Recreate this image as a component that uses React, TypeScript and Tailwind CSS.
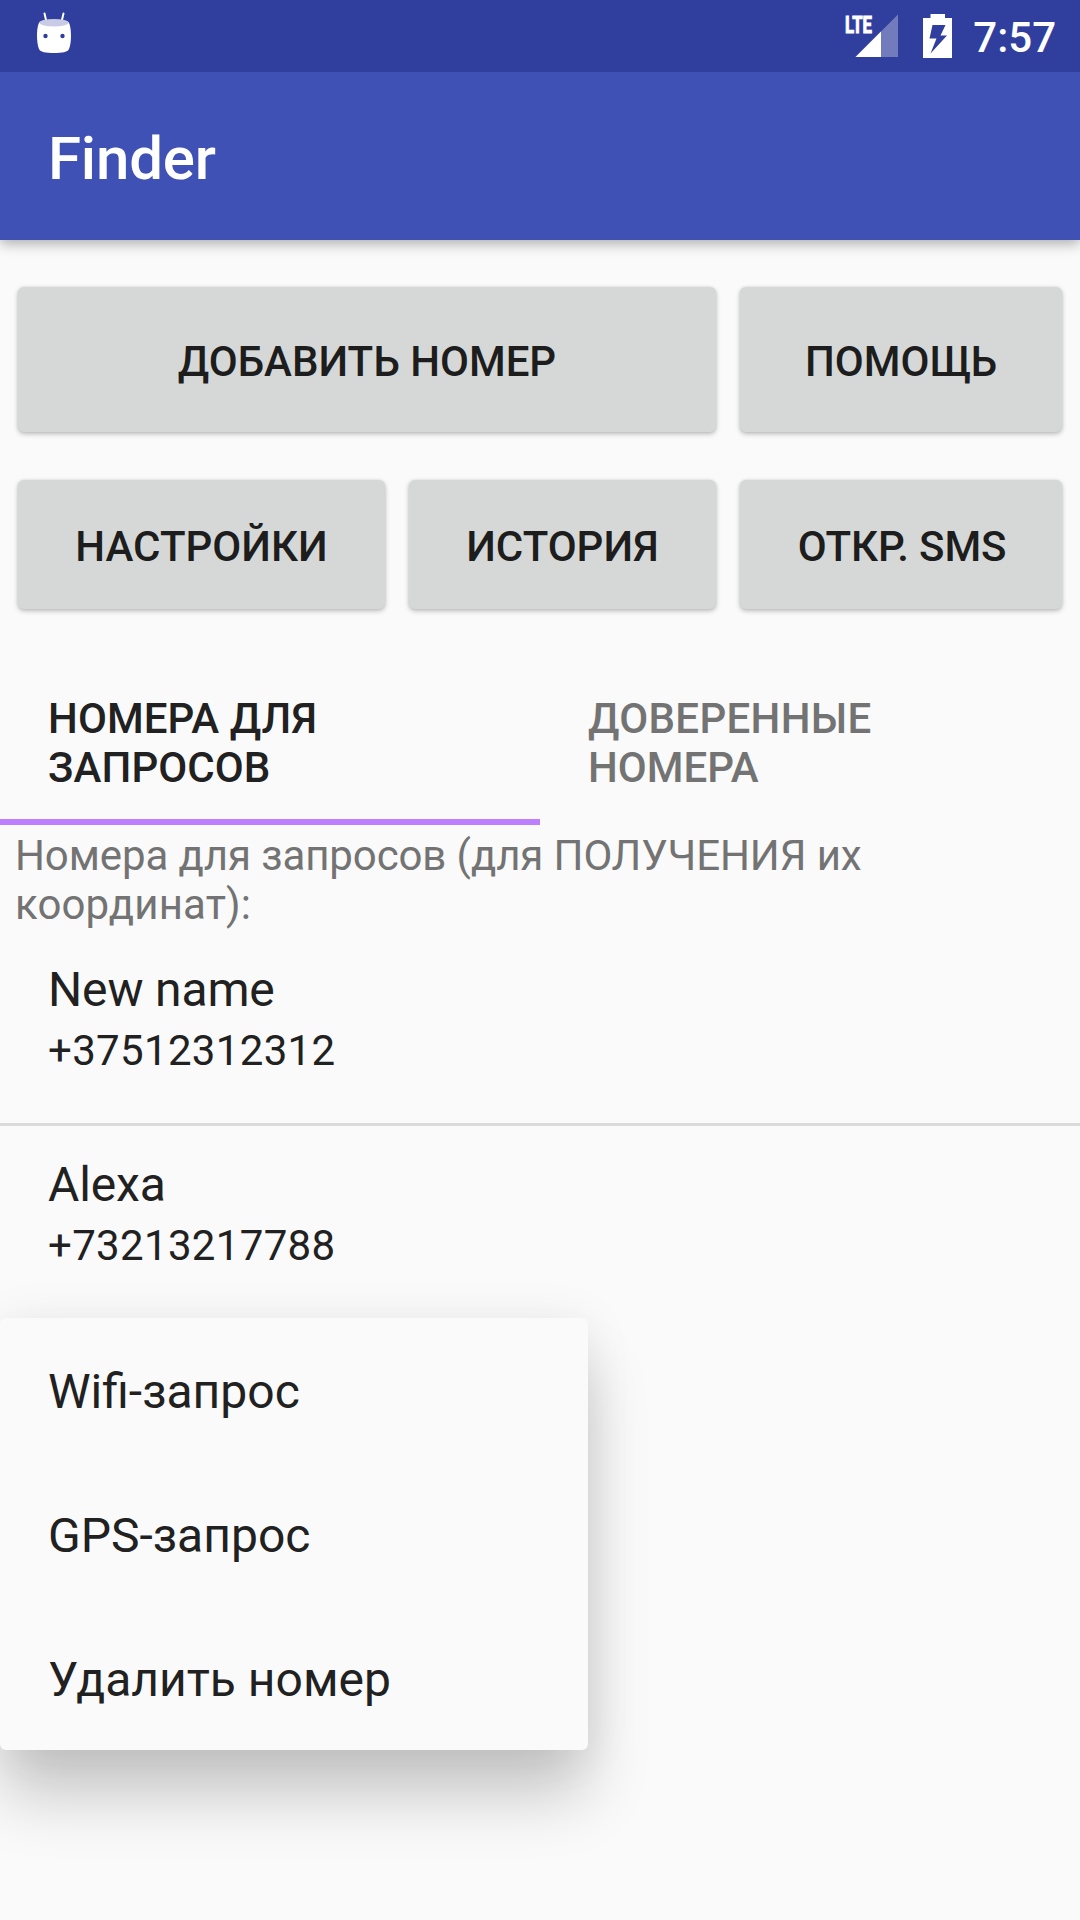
import React from "react";

function AndroidIcon() {
  return (
    <svg className="ml-9 mt-3 h-[42px] w-9" viewBox="36 12 36 42" fill="none">
      <path d="M44.5 13.5L46.5 22M63.5 13.5L61.5 22" stroke="#fff" strokeWidth="2" strokeLinecap="round" />
      <path d="M39.5 22C37.5 25 37 31 37 36C37 41 37.8 46 39 49C40 52 46 53 54 53C62 53 68 52 69 49C70.300 46 71 41 71 36C71 31 70.500 25 68.500 22C66 19.500 42 19.500 39.500 22Z" fill="#fff" />
      <ellipse cx="54" cy="22.700" rx="14.500" ry="3.800" fill="#c9cbe5" />
      <circle cx="45.500" cy="36" r="2.200" fill="#303e9e" />
      <circle cx="62.500" cy="36" r="2.200" fill="#303e9e" />
    </svg>
  );
}

function SignalIcon() {
  return (
    <svg className="h-[54px] w-14 overflow-visible" viewBox="844 5 56 54">
      <path d="M855.500 57L898 14.500V57Z" fill="#fff" fillOpacity=".32" />
      <path d="M855.500 57L881 31.500V57Z" fill="#fff" />
      <text x="845" y="33" fill="#fff" stroke="#fff" strokeWidth="1.100" fontSize="24.500" fontWeight="700" fontFamily="Roboto, sans-serif" textLength="27" lengthAdjust="spacingAndGlyphs">LTE</text>
    </svg>
  );
}

function BatteryIcon() {
  return (
    <svg className="mt-2 ml-[21px] h-[46px] w-[34px]" viewBox="921 13 34 46">
      <path fillRule="evenodd" fill="#fff" d="M930.500 14H945V18H952V58H923V18H930.500ZM932.500 25L929.500 38.500H936.500L930.500 53.500L947 35.500H940.500L945.500 25Z" />
    </svg>
  );
}

function Button({ label, className }: { label: string; className: string }) {
  return (
    <button
      className={
        "flex items-center justify-center rounded-md bg-[#d6d8d7] pt-[3px] font-medium text-[#1d1d1d] shadow-[0_2px_5px_rgba(0,0,0,0.25),0_0_3px_rgba(0,0,0,0.08)] " +
        className
      }
    >
      {label}
    </button>
  );
}

function Contact({ name, phone, className }: { name: string; phone: string; className: string }) {
  return (
    <div className={"flex flex-col px-12 " + className}>
      <div className="text-[48px] leading-[56px] tracking-[-0.15px]">{name}</div>
      <div className="mt-2 tracking-[0.33px]">{phone}</div>
    </div>
  );
}

export default function App() {
  return (
    <div className="relative h-[1920px] w-[1080px] overflow-hidden bg-[#fafafa] font-['Roboto',sans-serif] text-[42px] leading-[49px] text-[#212121]">
      <div className="relative z-10 flex h-[72px] bg-[#303e9e] text-white">
        <AndroidIcon />
        <div className="ml-auto flex pt-[5px] pr-6">
          <SignalIcon />
          <BatteryIcon />
          <span className="mt-2 ml-[18px] font-medium">7:57</span>
        </div>
      </div>
      <header className="h-[168px] bg-[#3f51b5] pt-[52px] pl-12 text-[60px] leading-[70px] font-medium tracking-[-0.2px] text-white shadow-[0_4px_12px_rgba(0,0,0,0.3)]">
        Finder
      </header>

      <div className="flex h-[193px] items-start gap-6 px-[18px] pt-[47px]">
        <Button label="ДОБАВИТЬ НОМЕР" className="h-[145px] w-[698px]" />
        <Button label="ПОМОЩЬ" className="h-[145px] w-[322px]" />
      </div>
      <div className="flex gap-6 px-[18px] pt-[47px]">
        <Button label="НАСТРОЙКИ" className="h-[129px] w-[367px]" />
        <Button label="ИСТОРИЯ" className="h-[129px] w-[307px]" />
        <Button label="ОТКР. SMS" className="h-[129px] w-[322px] pl-[2px] tracking-[-0.15px]" />
      </div>

      <div className="mt-[58px] grid h-[158px] grid-cols-2 font-medium">
        <div className="border-b-[6px] border-[#bd7fff] px-12 pt-[27px] tracking-[0.08px]">
          НОМЕРА ДЛЯ
          <br />
          ЗАПРОСОВ
        </div>
        <div className="px-12 pt-[27px] text-[#737373]">
          <span className="tracking-[0.32px]">ДОВЕРЕННЫЕ</span>
          <br />
          НОМЕРА
        </div>
      </div>
      <p className="h-[103px] px-[15px] pt-[6px] text-[#737373]">
        <span className="tracking-[-0.1px]">Номера для запросов (для ПОЛУЧЕНИЯ их</span>
        <br />
        <span className="tracking-[0.12px]">координат):</span>
      </p>
      <Contact name="New name" phone="+37512312312" className="h-[195px] pt-[34px]" />
      <div className="h-[3px] bg-[#dadada]" />
      <Contact name="Alexa" phone="+73213217788" className="h-[192px] pt-[31px]" />

      <div className="absolute top-[1318px] left-0 w-[588px] rounded-md bg-[#fafafa] text-[48px] shadow-[0_48px_64px_-2px_rgba(0,0,0,0.2),0_4px_48px_rgba(0,0,0,0.08)]">
        {["Wifi-запрос", "GPS-запрос", "Удалить номер"].map((item) => (
          <div key={item} className="flex h-36 items-center px-12 pt-[2px]">
            {item}
          </div>
        ))}
      </div>
    </div>
  );
}
